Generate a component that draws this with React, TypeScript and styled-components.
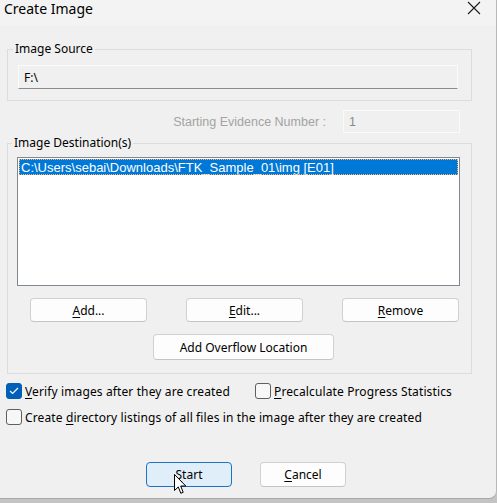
import React from "react";
import styled, { createGlobalStyle } from "styled-components";

const Global = createGlobalStyle`
  html, body { margin: 0; padding: 0; background: #c4c4c4; }
  body { width: 497px; height: 503px; overflow: hidden; font-family: "Noto Sans", "Segoe UI", sans-serif; font-size: 12px; color: #000; }
  * { box-sizing: border-box; }
`;

const Window = styled.div`
  width: 497px;
  height: 499px;
  background: #f0f0f0;
  border-bottom-right-radius: 8px;
  border-bottom: 1px solid #a9a9a9;
  border-right: 1px solid #b8b8b8;
  display: flex;
  flex-direction: column;
`;

const TitleBar = styled.div`
  height: 26px;
  background: #f3f3f3;
  display: flex;
  align-items: flex-start;
  justify-content: space-between;
  padding: 0 15px 0 4px;
`;

const Title = styled.div`
  font-size: 14px;
  line-height: 18px;
  color: #000;
`;

const CloseIcon = styled.svg`
  margin-top: 1px;
  width: 14px;
  height: 14px;
`;

const Content = styled.div`
  padding: 15px 0 0 7px;
  display: flex;
  flex-direction: column;
`;

const Group = styled.fieldset<{ $pad: string }>`
  width: 465px;
  margin: 0;
  border: 1px solid #dcdcdc;
  padding: ${(p) => p.$pad};
  display: flex;
  flex-direction: column;
  min-width: 0;
`;

const Legend = styled.legend`
  font-size: 12px;
  line-height: 16px;
  padding: 0 2px;
  margin-left: -5px;
  color: #000;
`;

const SourceField = styled.div`
  height: 24px;
  width: 440px;
  background: #f0f0f0;
  border: 1px solid #fbfbfb;
  border-bottom-color: #8c8c8c;
  padding-left: 5px;
  display: flex;
  align-items: center;
  font-size: 12px;
`;

const EvidenceRow = styled.div`
  width: 465px;
  margin-top: 9px;
  display: flex;
  justify-content: flex-end;
  align-items: center;
  gap: 17px;
  padding-right: 12px;
`;

const DimLabel = styled.span`
  font-family: "Liberation Sans", Arial, sans-serif;
  font-size: 12.5px;
  color: #a3a3a3;
`;

const DimField = styled.div`
  width: 117px;
  height: 23px;
  border: 1px solid #fafafa;
  padding-left: 5px;
  display: flex;
  align-items: center;
  font-family: "Liberation Sans", Arial, sans-serif;
  font-size: 12.5px;
  color: #8a8a8a;
`;

const DestGroup = styled(Group)`
  margin-top: 2px;
`;

const ListBox = styled.div`
  height: 129px;
  width: 443px;
  background: #fff;
  border: 1px solid #828790;
  padding: 1px 1px 0 1px;
`;

const ListItem = styled.div<{ $selected?: boolean }>`
  height: 16px;
  padding-left: 2px;
  display: flex;
  align-items: center;
  font-family: "Liberation Sans", Arial, sans-serif;
  font-size: 13px;
  background: ${(p) => (p.$selected ? "#0078d7" : "transparent")};
  color: ${(p) => (p.$selected ? "#fff" : "#000")};
  outline: ${(p) => (p.$selected ? "1px dotted #f7b36b" : "none")};
  outline-offset: -1px;
`;

const ButtonRow = styled.div`
  display: flex;
  gap: 39px;
  margin: 12px 0 0 13px;
`;

const Button = styled.button<{ $w: number; $h?: number; $primary?: boolean }>`
  width: ${(p) => p.$w}px;
  height: ${(p) => p.$h ?? 24}px;
  border-radius: 4px;
  border: 1px solid ${(p) => (p.$primary ? "#1a73c4" : "#d1d1d1")};
  border-bottom-color: ${(p) => (p.$primary ? "#1a73c4" : "#c4c4c4")};
  background: ${(p) => (p.$primary ? "#e0eef9" : "#fdfdfd")};
  font-family: "Noto Sans", "Segoe UI", sans-serif;
  font-size: 12px;
  color: #000;
  padding: 0;
  display: flex;
  align-items: center;
  justify-content: center;
  position: relative;
`;

const OverflowWrap = styled.div`
  margin: 12px 0 0 136px;
`;

const U = styled.span`
  text-decoration: underline;
  text-underline-offset: 2px;
`;

const Checks = styled.div`
  margin-top: 9px;
  padding-left: 6px;
  display: grid;
  grid-template-columns: 249px 1fr;
  row-gap: 10px;
`;

const CheckRow = styled.label<{ $span?: boolean }>`
  display: flex;
  align-items: center;
  gap: 3px;
  height: 16px;
  grid-column: ${(p) => (p.$span ? "1 / 3" : "auto")};
  font-size: 12px;
  letter-spacing: 0.12px;
  white-space: nowrap;
`;

const Box = styled.span<{ $checked?: boolean }>`
  width: 16px;
  height: 16px;
  border-radius: 3px;
  flex: none;
  display: flex;
  align-items: center;
  justify-content: center;
  background: ${(p) => (p.$checked ? "#005fb8" : "#f7f7f7")};
  border: 1px solid ${(p) => (p.$checked ? "#005fb8" : "#5f5f5f")};
`;

const Footer = styled.div`
  margin-top: 37px;
  display: flex;
  gap: 28px;
  padding-left: 146px;
`;

const Cursor = styled.svg`
  position: absolute;
  left: 27px;
  top: 11px;
  width: 13px;
  height: 21px;
  pointer-events: none;
`;

export default function App() {
  return (
    <>
      <Global />
      <Window>
        <TitleBar>
          <Title>Create Image</Title>
          <CloseIcon viewBox="0 0 14 14">
            <path d="M1 1 L13 13 M13 1 L1 13" stroke="#1a1a1a" strokeWidth="1.1" fill="none" />
          </CloseIcon>
        </TitleBar>
        <Content>
          <Group $pad="8px 13px 11px 10px">
            <Legend>Image Source</Legend>
            <SourceField>F:\</SourceField>
          </Group>
          <EvidenceRow>
            <DimLabel>Starting Evidence Number :</DimLabel>
            <DimField>1</DimField>
          </EvidenceRow>
          <DestGroup $pad="6px 10px 13px 9px">
            <Legend>Image Destination(s)</Legend>
            <ListBox>
              <ListItem $selected>C:\Users\sebai\Downloads\FTK_Sample_01\img [E01]</ListItem>
            </ListBox>
            <ButtonRow>
              <Button $w={117}><span><U>A</U>dd...</span></Button>
              <Button $w={117}><span><U>E</U>dit...</span></Button>
              <Button $w={117}><span><U>R</U>emove</span></Button>
            </ButtonRow>
            <OverflowWrap>
              <Button $w={181} $h={26}>Add Overflow Location</Button>
            </OverflowWrap>
          </DestGroup>
        </Content>
        <Checks>
          <CheckRow>
            <Box $checked>
              <svg width="10" height="8" viewBox="0 0 10 8">
                <path d="M1 4 L3.6 6.5 L9 1" stroke="#fff" strokeWidth="1.2" fill="none" />
              </svg>
            </Box>
            <span><U>V</U>erify images after they are created</span>
          </CheckRow>
          <CheckRow>
            <Box />
            <span><U>P</U>recalculate Progress Statistics</span>
          </CheckRow>
          <CheckRow $span>
            <Box />
            <span>Create <U>d</U>irectory listings of all files in the image after they are created</span>
          </CheckRow>
        </Checks>
        <Footer>
          <Button $w={86} $h={25} $primary>
            <span><U>S</U>tart</span>
            <Cursor viewBox="0 0 13 21">
              <path d="M0.5 0.5 L0.5 16.5 L4.3 12.9 L6.8 19.3 L9.2 18.3 L6.7 12 L11.8 12 Z" fill="#fff" stroke="#000" strokeWidth="1" />
            </Cursor>
          </Button>
          <Button $w={86} $h={25}><span><U>C</U>ancel</span></Button>
        </Footer>
      </Window>
    </>
  );
}
